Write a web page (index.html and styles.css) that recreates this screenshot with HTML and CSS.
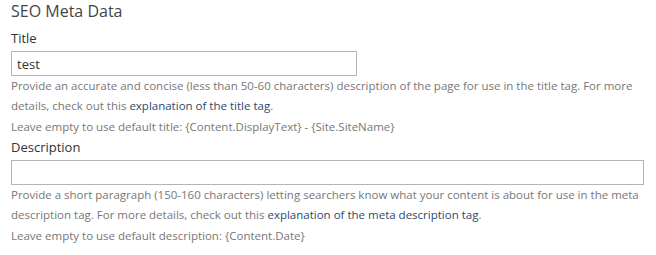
FILE: index.html
```html
<!DOCTYPE html>
<html lang="en">
<head>
	<meta charset="UTF-8">
	<meta name="viewport" content="width=device-width, initial-scale=1.0">
	<title>SEO Meta Data</title>
	<link rel="stylesheet" href="styles.css">
</head>
<body>

	<fieldset class="seo">
		<legend class="seo-title">SEO Meta Data</legend>

		<div class="field">
			<label for="seoTitle">Title</label>
			<input type="text" id="seoTitle" class="input-medium" value="test">
			<p class="hint">Provide an accurate and concise (less than 50-60 characters) description of the page for use in the title tag. For more details, check out this <a href="#">explanation of the title tag</a>.</p>
			<p class="hint hint-default">Leave empty to use default title: {Content.DisplayText} - {Site.SiteName}</p>
		</div>

		<div class="field">
			<label for="seoDescription">Description</label>
			<input type="text" id="seoDescription" class="input-large">
			<p class="hint">Provide a short paragraph (150-160 characters) letting searchers know what your content is about for use in the meta description tag. For more details, check out this <a href="#">explanation of the meta description tag</a>.</p>
			<p class="hint hint-default">Leave empty to use default description: {Content.Date}</p>
		</div>
	</fieldset>

</body>
</html>
```

FILE: styles.css
```css
* {
	box-sizing: border-box;
}
body {
	font-family: "Open Sans", "Noto Sans", sans-serif;
	margin: 0;
	padding: 0 11px;
	background: #fff;
	color: #333;
}
.seo {
	border: none;
	margin: 0;
	padding: 0;
	min-width: 0;
}
.seo-title {
	padding: 0;
	font-size: 16px;
	line-height: 23px;
	color: #444;
	margin-bottom: 5px;
}
.field label {
	display: block;
	font-size: 13px;
	line-height: 20px;
	margin-bottom: 3px;
	color: #333;
}
.field input {
	display: block;
	height: 25px;
	padding: 0 5px;
	border: 1px solid #b4b4b4;
	font-family: inherit;
	font-size: 13px;
	color: #333;
	margin: 0;
}
.input-medium {
	width: 346px;
}
.input-large {
	width: 633px;
}
.hint {
	margin: 0;
	font-size: 11.5px;
	line-height: 20px;
	color: #777;
}
.hint-default {
	margin-top: 1px;
}
.hint a {
	color: #2b4a6f;
	text-decoration: none;
}
```
